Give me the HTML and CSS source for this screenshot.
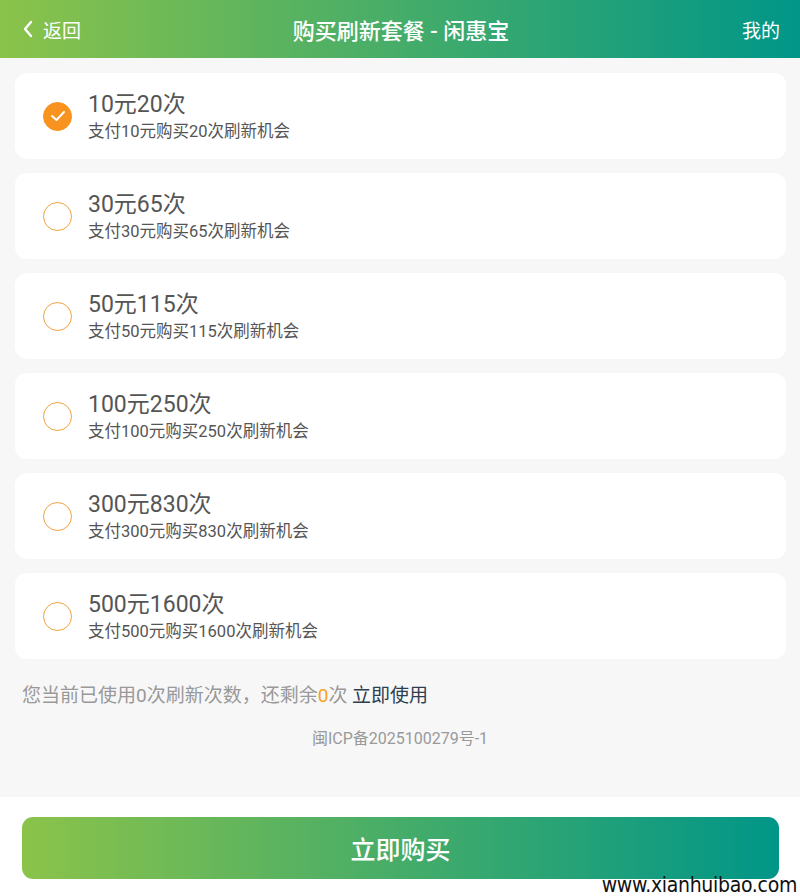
FILE: index.html
```html
<html>

<head>
    <meta charset="utf-8">
    <link rel="stylesheet" href="styles.css">
</head>

<body>

    <header class="topbar">
        <div class="back">
            <svg width="12" height="18" viewBox="0 0 12 18"><path d="M9 2 L3 9 L9 16" fill="none" stroke="#fff" stroke-width="2.4" stroke-linecap="round" stroke-linejoin="round"/></svg>
            <span>返回</span>
        </div>
        <div class="title">购买刷新套餐 - 闲惠宝</div>
        <div class="mine">我的</div>
    </header>

    <div class="plans">
        <div class="plan">
            <span class="radio checked">
                <svg width="16" height="12" viewBox="0 0 16 12"><path d="M2 6 L6.5 10 L14 2" fill="none" stroke="#fff" stroke-width="2" stroke-linecap="round" stroke-linejoin="round"/></svg>
            </span>
            <div class="info">
                <div class="name">10元20次</div>
                <div class="desc">支付10元购买20次刷新机会</div>
            </div>
        </div>
        <div class="plan">
            <span class="radio"></span>
            <div class="info">
                <div class="name">30元65次</div>
                <div class="desc">支付30元购买65次刷新机会</div>
            </div>
        </div>
        <div class="plan">
            <span class="radio"></span>
            <div class="info">
                <div class="name">50元115次</div>
                <div class="desc">支付50元购买115次刷新机会</div>
            </div>
        </div>
        <div class="plan">
            <span class="radio"></span>
            <div class="info">
                <div class="name">100元250次</div>
                <div class="desc">支付100元购买250次刷新机会</div>
            </div>
        </div>
        <div class="plan">
            <span class="radio"></span>
            <div class="info">
                <div class="name">300元830次</div>
                <div class="desc">支付300元购买830次刷新机会</div>
            </div>
        </div>
        <div class="plan">
            <span class="radio"></span>
            <div class="info">
                <div class="name">500元1600次</div>
                <div class="desc">支付500元购买1600次刷新机会</div>
            </div>
        </div>
    </div>

    <p class="usage">您当前已使用0次刷新次数，还剩余<span class="left">0</span>次 <a class="use">立即使用</a></p>
    <p class="icp">闽ICP备2025100279号-1</p>

    <footer class="bottom">
        <button class="buy">立即购买</button>
        <span class="mark">www.xianhuibao.com</span>
    </footer>

</body>

</html>
```

FILE: styles.css
```css
body {
    margin: 0;
    background-color: #f7f7f7;
    font-family: Roboto, "Noto Sans CJK SC", sans-serif;
    color: #555;
    height: 896px;
    display: flex;
    flex-direction: column;
    overflow: hidden;
}

.topbar {
    height: 58px;
    background: linear-gradient(to right, #8bc34a, #009688);
    color: white;
    display: flex;
    align-items: center;
    justify-content: space-between;
    padding: 0 20px 0 22px;
}

.back {
    display: flex;
    align-items: center;
    gap: 9px;
    font-size: 19px;
    width: 120px;
}

.title {
    font-size: 22px;
    font-weight: 500;
}

.mine {
    font-size: 19px;
    width: 120px;
    text-align: right;
}

.plans {
    display: flex;
    flex-direction: column;
    gap: 14px;
    padding: 15px 14px 0 15px;
}

.plan {
    background-color: white;
    border-radius: 12px;
    height: 86px;
    display: flex;
    align-items: center;
    padding-left: 28px;
}

.radio {
    width: 27px;
    height: 27px;
    border: 1.5px solid #f0a040;
    border-radius: 50%;
    margin-right: 16px;
    display: flex;
    align-items: center;
    justify-content: center;
}

.radio.checked {
    background-color: #f7931e;
    border-color: #f7931e;
}

.info {
    padding-top: 2px;
}

.name {
    font-size: 23px;
    line-height: 30px;
    color: #555;
}

.desc {
    font-size: 16.5px;
    line-height: 24px;
    color: #555;
}

.usage {
    margin: 21px 22px 0;
    font-size: 19px;
    color: #999;
}

.left {
    color: #f7a21e;
}

.use {
    color: #2c3e50;
}

.icp {
    margin: 18px 0 0;
    text-align: center;
    font-size: 16px;
    color: #999;
}

.bottom {
    margin-top: auto;
    height: 99px;
    background-color: white;
    position: relative;
    padding: 20px 21px 0 22px;
    box-sizing: border-box;
}

.buy {
    width: 100%;
    height: 62px;
    border: none;
    border-radius: 11px;
    background: linear-gradient(to right, #8bc34a, #009688);
    color: white;
    font-size: 25px;
    font-family: "Noto Sans CJK SC", sans-serif;
    font-weight: 500;
}

.mark {
    position: absolute;
    right: 3px;
    bottom: 0;
    font-size: 21px;
    line-height: 22px;
    color: #111;
    font-family: "DejaVu Sans Condensed", sans-serif;
    letter-spacing: -0.3px;
}
```
